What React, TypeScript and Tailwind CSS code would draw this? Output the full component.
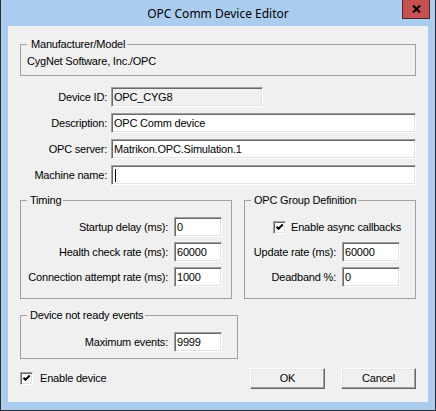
import React from "react";

const sunken =
  "border border-t-[#a0a0a0] border-l-[#a0a0a0] border-b-white border-r-white shadow-[inset_1px_1px_0_#696969,inset_-1px_-1px_0_#e3e3e3]";

function TextBox({
  value = "",
  className = "",
  disabled = false,
  caret = false,
}: {
  value?: string;
  className?: string;
  disabled?: boolean;
  caret?: boolean;
}) {
  return (
    <div
      className={`h-[20px] flex items-center pl-[2px] ${sunken} ${
        disabled ? "bg-[#f0f0f0]" : "bg-white"
      } ${className}`}
    >
      {caret && <span className="ml-[1px] w-[1px] h-[13px] bg-black" />}
      <span className="leading-[13px] whitespace-nowrap">{value}</span>
    </div>
  );
}

function CheckBox() {
  return (
    <span className={`w-[13px] h-[13px] shrink-0 bg-white ${sunken} flex items-center justify-center`}>
      <svg width="9" height="9" viewBox="0 0 9 9">
        <path d="M1.5 3.8 L3.5 5.8 L7.8 1.5" stroke="#000" strokeWidth="2" fill="none" />
      </svg>
    </span>
  );
}

function Button({ label }: { label: string }) {
  return (
    <button className="w-[75px] h-[21px] bg-[#f0f0f0] border border-t-white border-l-white border-b-[#696969] border-r-[#696969] shadow-[inset_-1px_-1px_0_#a0a0a0,inset_1px_1px_0_#e3e3e3] leading-[13px]">
      {label}
    </button>
  );
}

const group = "border border-[#a0a0a0] px-[6px] min-w-0";
const legend = "pl-[3px] pr-[2px] leading-[13px]";

export default function App() {
  return (
    <div className="w-[436px] h-[411px] bg-[#aacdef] border-x border-b border-[#2e2e2e] flex flex-col text-[11px] tracking-[-0.2px] text-black font-['Liberation_Sans',Arial,sans-serif]">
      {/* title bar */}
      <div className="h-[26px] flex items-start">
        <div className="w-[33px]" />
        <div className="flex-1 text-center pt-[6px] leading-[16px] text-[12px] tracking-normal font-['Noto_Sans',sans-serif]">
          OPC Comm Device Editor
        </div>
        <div className="w-[28px] h-[19px] mr-[5px] bg-[#c75050] border border-[#4a2a2a] border-t-0 flex items-center justify-center">
          <svg width="9" height="8" viewBox="0 0 9 8">
            <path d="M1 0.5 L8 7.5 M8 0.5 L1 7.5" stroke="#000" strokeWidth="2" />
          </svg>
        </div>
      </div>

      {/* client area */}
      <div className="mx-[7px] h-[376px] bg-[#f0f0f0] px-[12px] pt-[12px] flex flex-col">
        <fieldset className={`${group} pb-[7px]`}>
          <legend className={`${legend} pl-[4px]`}>Manufacturer/Model</legend>
          <div className="leading-[13px] pt-[4px]">CygNet Software, Inc./OPC</div>
        </fieldset>

        <div className="mt-[11px] grid grid-cols-[87px_1fr] gap-x-[4px] gap-y-[6px] items-center">
          <span className="text-right">Device ID:</span>
          <TextBox value="OPC_CYG8" disabled className="w-[152px]" />
          <span className="text-right">Description:</span>
          <TextBox value="OPC Comm device" />
          <span className="text-right">OPC server:</span>
          <TextBox value="Matrikon.OPC.Simulation.1" />
          <span className="text-right">Machine name:</span>
          <TextBox caret />
        </div>

        <div className="mt-[9px] flex gap-[12px]">
          <fieldset className={`${group} w-[212px] shrink-0 pt-[10px] pb-[11px]`}>
            <legend className={legend}>Timing</legend>
            <div className="grid grid-cols-[minmax(0,1fr)_48px] gap-x-[6px] gap-y-[5px] items-center pr-[3px]">
              <span className="text-right whitespace-nowrap">Startup delay (ms):</span>
              <TextBox value="0" />
              <span className="text-right whitespace-nowrap">Health check rate (ms):</span>
              <TextBox value="60000" />
              <span className="text-right whitespace-nowrap">Connection attempt rate (ms):</span>
              <TextBox value="1000" />
            </div>
          </fieldset>

          <fieldset className={`${group} flex-1 pt-[10px] pb-[11px]`}>
            <legend className={legend}>OPC Group Definition</legend>
            <div className="h-[20px] flex items-center gap-[5px] pl-[22px] pt-[1px]">
              <CheckBox />
              <span className="leading-[13px]">Enable async callbacks</span>
            </div>
            <div className="mt-[5px] grid grid-cols-[minmax(0,1fr)_58px] gap-x-[6px] gap-y-[5px] items-center pr-[9px]">
              <span className="text-right whitespace-nowrap">Update rate (ms):</span>
              <TextBox value="60000" />
              <span className="text-right whitespace-nowrap">Deadband %:</span>
              <TextBox value="0" />
            </div>
          </fieldset>
        </div>

        <fieldset className={`${group} mt-[10px] w-[218px] pt-[10px] pb-[6px]`}>
          <legend className={legend}>Device not ready events</legend>
          <div className="grid grid-cols-[minmax(0,1fr)_48px] gap-x-[6px] items-center pr-[9px]">
            <span className="text-right whitespace-nowrap">Maximum events:</span>
            <TextBox value="9999" />
          </div>
        </fieldset>

        <div className="mt-[9px] flex items-center">
          <CheckBox />
          <span className="ml-[7px] leading-[13px] flex-1">Enable device</span>
          <div className="flex gap-[16px]">
            <Button label="OK" />
            <Button label="Cancel" />
          </div>
        </div>
      </div>
    </div>
  );
}
